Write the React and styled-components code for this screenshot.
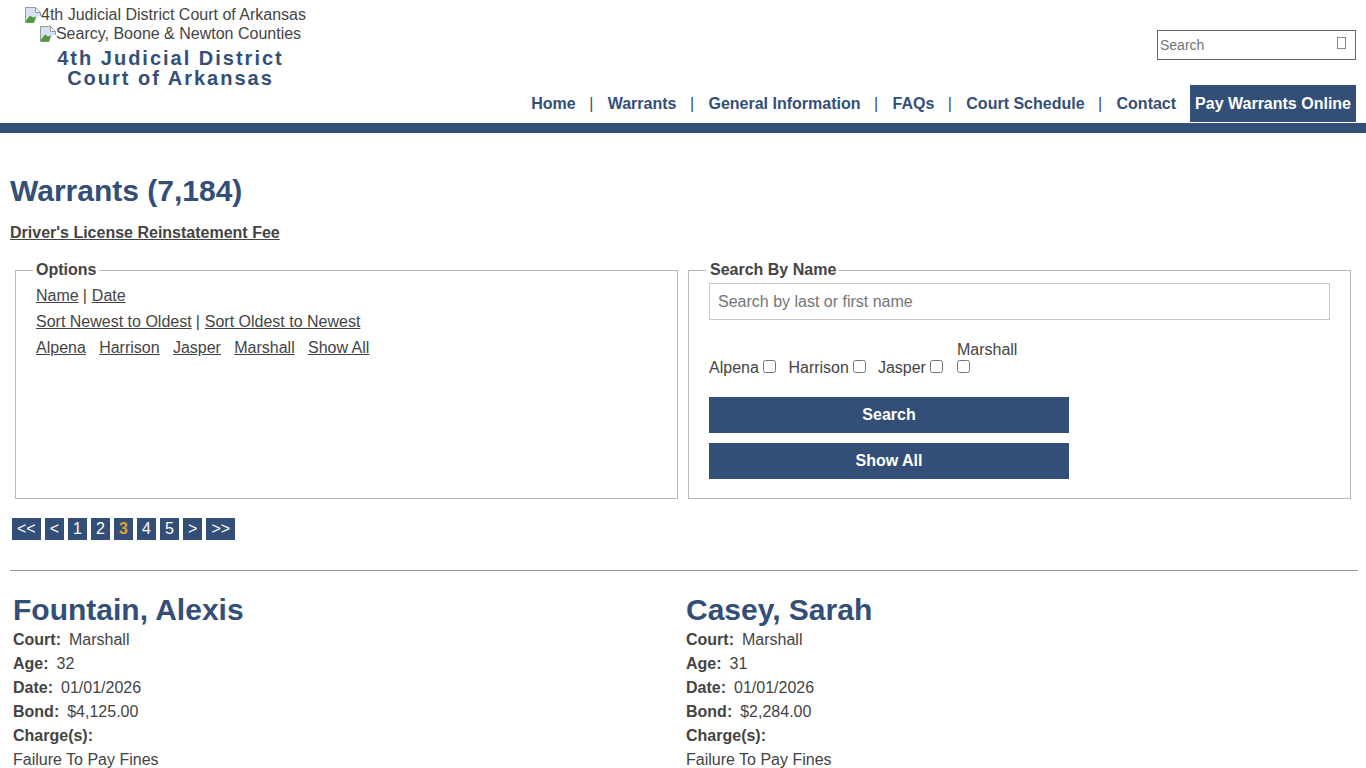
import React from "react";
import styled, { createGlobalStyle } from "styled-components";

const navy = "#344f77";
const ink = "#444";

const GlobalStyle = createGlobalStyle`
  html, body { margin: 0; padding: 0; background: #fff; }
  body { font-family: "Liberation Sans", Arial, sans-serif; font-size: 16px; color: ${ink}; }
  #root { height: 768px; overflow: hidden; }
`;

const Header = styled.header`
  height: 123px;
  border-bottom: 10px solid ${navy};
  display: flex;
  justify-content: space-between;
  padding: 0 10px 0 0;
`;

const Brand = styled.div`
  width: 341px;
  padding-top: 5px;
  text-align: center;
  line-height: 19px;
`;

const LogoLine = styled.div`
  display: flex;
  justify-content: center;
  align-items: center;
  height: 19px;
  padding-right: ${(p) => p.$shift || 0}px;
`;

const BrandName = styled.div`
  margin-top: 5px;
  color: ${navy};
  font-size: 20px;
  font-weight: bold;
  letter-spacing: 2px;
  line-height: 20px;
`;

const HeaderRight = styled.div`
  display: flex;
  flex-direction: column;
  align-items: flex-end;
`;

const SearchBox = styled.div`
  width: 186px;
  height: 28px;
  margin-top: 30px;
  border: 1px solid #666;
  display: flex;
  justify-content: space-between;
  padding: 0 9px 0 2px;
  font-size: 14px;
  line-height: 28px;
  color: #757575;
`;

const Tofu = styled.span`
  width: 7px;
  height: 10px;
  margin-top: 6px;
  border: 1px solid #888;
`;

const Nav = styled.nav`
  margin-top: 25px;
  display: flex;
  align-items: center;
  height: 37px;
`;

const NavLink = styled.a`
  color: ${navy};
  font-weight: bold;
  font-size: 16px;
`;

const NavSep = styled.span`
  width: 32px;
  padding-right: 1px;
  box-sizing: border-box;
  text-align: center;
  color: ${navy};
  font-size: 16px;
`;

const PayLink = styled.a`
  margin-left: 14px;
  height: 37px;
  line-height: 37px;
  padding: 0 5px;
  background: ${navy};
  color: #fff;
  font-weight: bold;
`;

const Main = styled.main`
  padding: 0 8px 0 10px;
`;

const Title = styled.h1`
  margin: 41px 0 0;
  color: ${navy};
  font-size: 30px;
  line-height: 34px;
`;

const FeeLink = styled.a`
  display: block;
  margin-top: 16px;
  font-weight: bold;
  text-decoration: underline;
  line-height: 18px;
  color: ${ink};
`;

const Panels = styled.div`
  margin-top: 19px;
  padding: 0 5px;
  display: grid;
  grid-template-columns: 663px 663px;
  column-gap: 10px;
`;

const Panel = styled.fieldset`
  margin: 0;
  height: 238px;
  box-sizing: border-box;
  border: 1px solid #b8b8b8;
  padding: 0 20px;
  min-width: 0;
`;

const PanelTitle = styled.legend`
  padding: 0 3px 0 ${(p) => p.$inset || 3}px;
  margin-left: -3px;
  font-weight: bold;
  line-height: 18px;
`;

const OptionRow = styled.div`
  display: flex;
  gap: ${(p) => p.$gap || 0}px;
  height: 26px;
  line-height: 26px;
  &:first-of-type { margin-top: 4px; }
`;

const TextLink = styled.a`
  color: ${ink};
  text-decoration: underline;
`;

const Bar = styled.span`
  padding: 0 5px 0 4px;
`;

const NameInput = styled.input`
  display: block;
  width: 621px;
  height: 37px;
  box-sizing: border-box;
  margin: 4px 0 0 0;
  padding: 0 8px;
  border: 1px solid #c8c8c8;
  font: 16px "Liberation Sans", Arial, sans-serif;
  &::placeholder { color: #757575; opacity: 1; }
`;

const CourtRow = styled.div`
  margin-top: 21px;
  height: 36px;
  display: flex;
  align-items: flex-end;
  line-height: 18px;
`;

const Court = styled.label`
  display: flex;
  align-items: center;
  margin-right: ${(p) => p.$gap}px;
`;

const CourtStacked = styled.label`
  display: block;
  width: 62px;
`;

const Check = styled.input.attrs({ type: "checkbox" })`
  width: 13px;
  height: 13px;
  margin: 0 0 0 4px;
  position: relative;
  top: -2px;
`;

const StackedCheck = styled(Check)`
  display: block;
  margin: 1px 0 4px;
  top: 0;
`;

const ActionButton = styled.button`
  display: block;
  width: 360px;
  height: 36px;
  border: 0;
  background: ${navy};
  color: #fff;
  font: bold 16px "Liberation Sans", Arial, sans-serif;
  margin-top: ${(p) => p.$top}px;
`;

const Pager = styled.div`
  display: flex;
  gap: 4px;
  margin: 19px 0 0 2px;
`;

const Page = styled.a`
  height: 22px;
  line-height: 22px;
  padding: 0 5px;
  min-width: 9px;
  text-align: center;
  background: ${navy};
  color: ${(p) => (p.$current ? "#e0a526" : "#fff")};
  font-weight: ${(p) => (p.$current ? "bold" : "normal")};
`;

const Rule = styled.hr`
  margin: 30px 0 0;
  border: 0;
  border-top: 1px solid #999;
  height: 0;
`;

const Results = styled.div`
  display: grid;
  grid-template-columns: 673px 673px;
  padding: 21px 0 0 3px;
`;

const Name = styled.h2`
  margin: 0;
  color: ${navy};
  font-size: 30px;
  line-height: 36px;
`;

const Line = styled.div`
  line-height: 24px;
  height: 24px;
  b { margin-right: 8px; }
`;

const Result = ({ name, age, bond }) => (
  <div>
    <Name>{name}</Name>
    <Line><b>Court:</b>Marshall</Line>
    <Line><b>Age:</b>{age}</Line>
    <Line><b>Date:</b>01/01/2026</Line>
    <Line><b>Bond:</b>{bond}</Line>
    <Line><b>Charge(s):</b></Line>
    <Line>Failure To Pay Fines</Line>
  </div>
);

const BrokenImage = () => (
  <svg width="16" height="16" viewBox="0 0 16 16">
    <path d="M.5 15.5V.5h10l5 5v10z" fill="#d5e2f5" stroke="#9a9a9a" />
    <path d="M10.5.5v5h5z" fill="#fff" stroke="#9a9a9a" />
    <path d="M1 15.5v-2l4-5 3 2 3-1-2 6z" fill="#4f9a3a" />
    <path d="M9 16l4-7 3 0v7z" fill="#fff" />
  </svg>
);

const navItems = ["Home", "Warrants", "General Information", "FAQs", "Court Schedule", "Contact"];
const pages = ["<<", "<", "1", "2", "3", "4", "5", ">", ">>"];

export default function App() {
  return (
    <>
      <GlobalStyle />
      <Header>
        <Brand>
          <LogoLine $shift={10}><BrokenImage />4th Judicial District Court of Arkansas</LogoLine>
          <LogoLine><BrokenImage />Searcy, Boone &amp; Newton Counties</LogoLine>
          <BrandName>4th Judicial District<br />Court of Arkansas</BrandName>
        </Brand>
        <HeaderRight>
          <SearchBox>Search<Tofu /></SearchBox>
          <Nav>
            {navItems.map((item, i) => (
              <React.Fragment key={item}>
                {i > 0 && <NavSep>|</NavSep>}
                <NavLink>{item}</NavLink>
              </React.Fragment>
            ))}
            <PayLink>Pay Warrants Online</PayLink>
          </Nav>
        </HeaderRight>
      </Header>
      <Main>
        <Title>Warrants (7,184)</Title>
        <FeeLink>Driver's License Reinstatement Fee</FeeLink>
        <Panels>
          <Panel>
            <PanelTitle>Options</PanelTitle>
            <OptionRow>
              <TextLink>Name</TextLink><Bar>|</Bar><TextLink>Date</TextLink>
            </OptionRow>
            <OptionRow>
              <TextLink>Sort Newest to Oldest</TextLink><Bar>|</Bar><TextLink>Sort Oldest to Newest</TextLink>
            </OptionRow>
            <OptionRow $gap={13.3}>
              <TextLink>Alpena</TextLink>
              <TextLink>Harrison</TextLink>
              <TextLink>Jasper</TextLink>
              <TextLink>Marshall</TextLink>
              <TextLink>Show All</TextLink>
            </OptionRow>
          </Panel>
          <Panel>
            <PanelTitle $inset={4}>Search By Name</PanelTitle>
            <NameInput placeholder="Search by last or first name" />
            <CourtRow>
              <Court $gap={12.6}>Alpena<Check /></Court>
              <Court $gap={12}>Harrison<Check /></Court>
              <Court $gap={14}>Jasper<Check /></Court>
              <CourtStacked>Marshall<StackedCheck /></CourtStacked>
            </CourtRow>
            <ActionButton $top={20}>Search</ActionButton>
            <ActionButton $top={10}>Show All</ActionButton>
          </Panel>
        </Panels>
        <Pager>
          {pages.map((p) => (
            <Page key={p} $current={p === "3"}>{p}</Page>
          ))}
        </Pager>
        <Rule />
        <Results>
          <Result name="Fountain, Alexis" age="32" bond="$4,125.00" />
          <Result name="Casey, Sarah" age="31" bond="$2,284.00" />
        </Results>
      </Main>
    </>
  );
}
